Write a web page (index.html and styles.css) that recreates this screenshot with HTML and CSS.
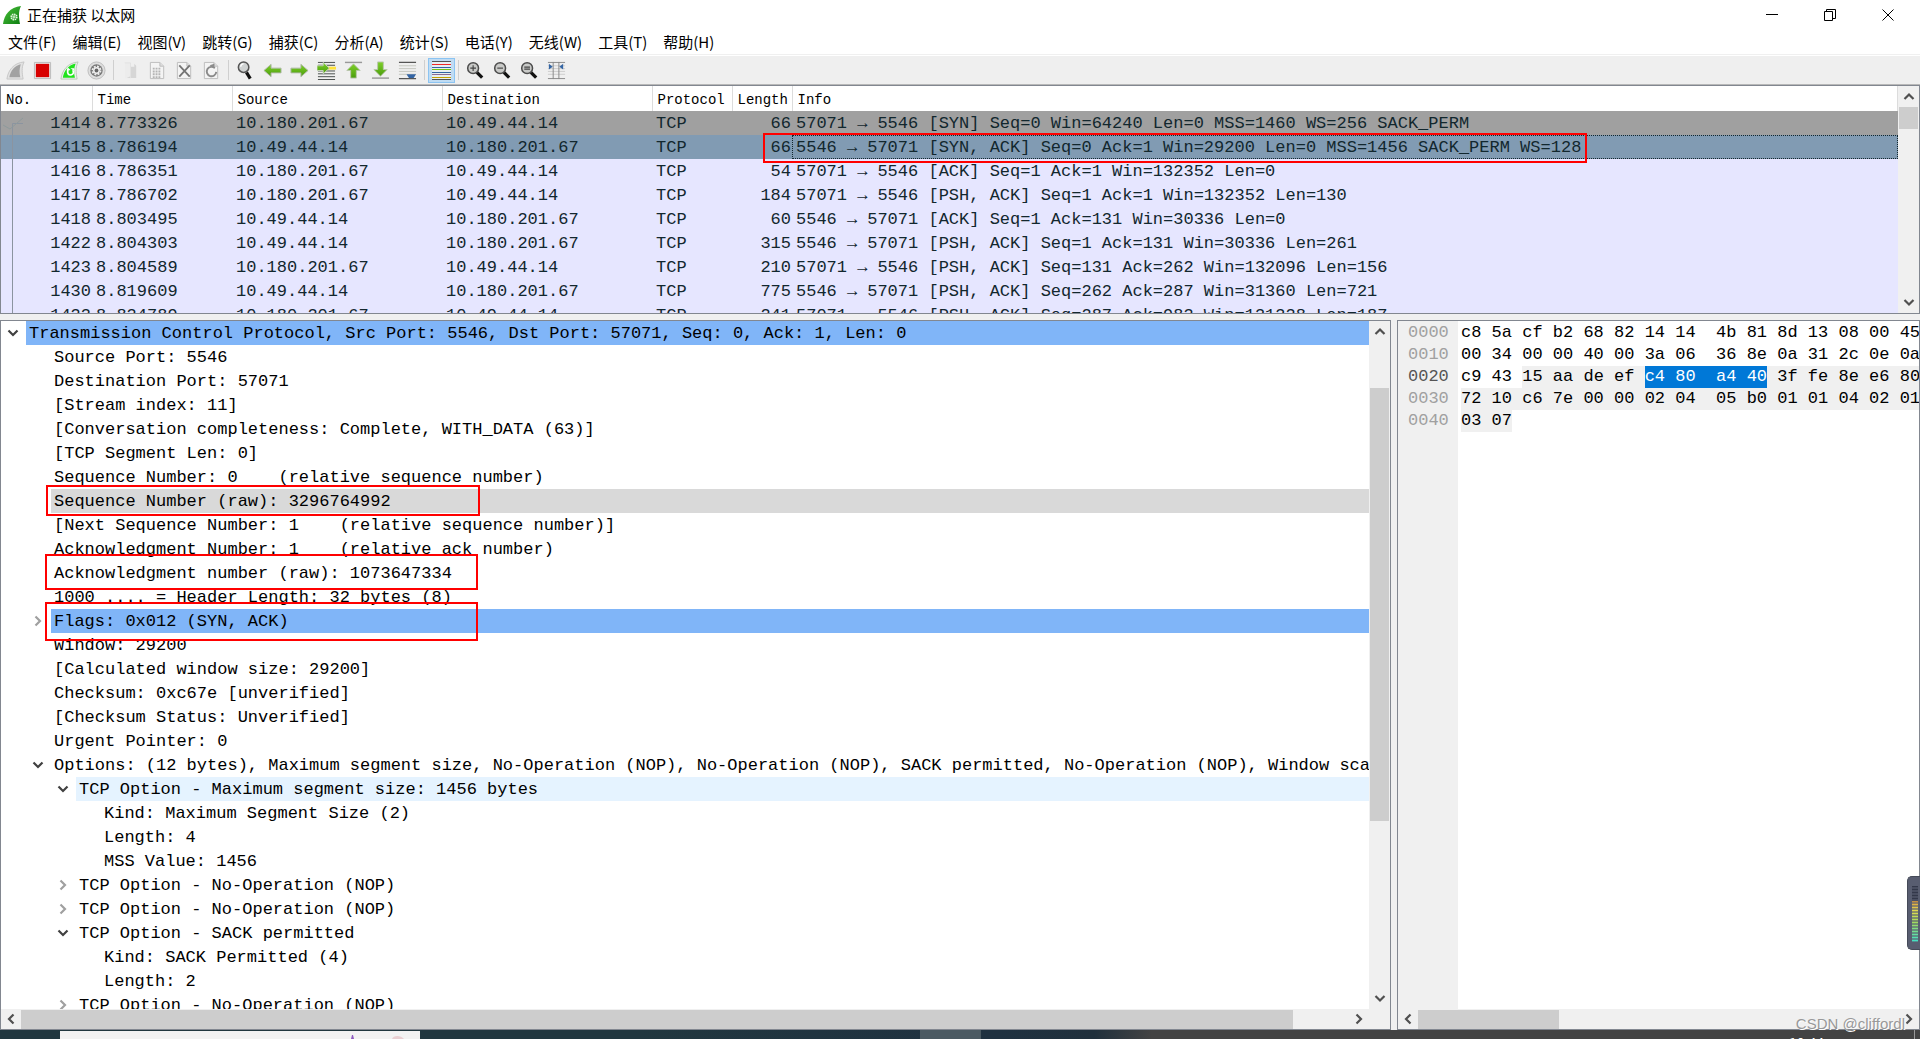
FILE: index.html
```html
<!DOCTYPE html>
<html lang="zh-CN">
<head>
<meta charset="utf-8">
<title>正在捕获 以太网</title>
<link rel="stylesheet" href="styles.css">
</head>
<body>
<svg class="defs" aria-hidden="true">
  <defs>
    <linearGradient id="fin" x1="0" y1="0" x2="1" y2="1"><stop offset="0" stop-color="#4cc23a"/><stop offset="1" stop-color="#0d7d12"/></linearGradient>
    <linearGradient id="green" x1="0" y1="0" x2="0" y2="1"><stop offset="0" stop-color="#7fd02a"/><stop offset="1" stop-color="#4a9c0c"/></linearGradient>
    <symbol id="down" viewBox="0 0 12 12"><path d="M1.5 3.5 6 8l4.500-4.500" fill="none" stroke="currentColor" stroke-width="2.200"/></symbol>
    <symbol id="up" viewBox="0 0 12 12"><path d="M1.500 8.500 6 4l4.500 4.500" fill="none" stroke="currentColor" stroke-width="2.200"/></symbol>
    <symbol id="right" viewBox="0 0 12 12"><path d="M3.500 1.500 8 6l-4.500 4.500" fill="none" stroke="currentColor" stroke-width="2.200"/></symbol>
    <symbol id="left" viewBox="0 0 12 12"><path d="M8.500 1.500 4 6l4.500 4.500" fill="none" stroke="currentColor" stroke-width="2.200"/></symbol>
    <symbol id="page" viewBox="0 0 20 20"><path d="M2.500 1.500h10l4 4v13h-14z" fill="#f4f4f4" stroke="#bdbdbd"/><path d="M12.500 1.500v4h4" fill="#ddd" stroke="#bdbdbd"/></symbol>
    <symbol id="lens" viewBox="0 0 20 20"><path d="m11.500 12 5.500 5.500" stroke="#111" stroke-width="3.400"/><circle cx="7.500" cy="7.500" r="5.700" fill="#c9cac8" stroke="#4c4c4c" stroke-width="1.600"/></symbol>
  </defs>
</svg>

<header class="titlebar">
  <svg class="app-icon" viewBox="0 0 20 20"><path d="M1 19C2 10 8 2 19 1c-3 6-2 12-1 18z" fill="url(#fin)"/><circle cx="12" cy="12" r="2.600" fill="none" stroke="#e4f6e0" stroke-width="2" stroke-dasharray="1.400 .6"/><circle cx="12" cy="12" r="1" fill="#e4f6e0"/></svg>
  <h1>正在捕获 以太网</h1>
  <div class="window-controls">
    <button aria-label="最小化"><svg viewBox="0 0 12 12"><path d="M0 5.500h12" stroke="#000"/></svg></button>
    <button aria-label="还原"><svg viewBox="0 0 12 12"><path d="M.5 2.500h8v9h-8zM2.500 2.500v-2h9v9h-3" fill="none" stroke="#000"/></svg></button>
    <button aria-label="关闭"><svg viewBox="0 0 12 12"><path d="m.5.5 11 11m0-11-11 11" stroke="#000"/></svg></button>
  </div>
</header>

<nav class="menubar">
  <button>文件(F)</button><button>编辑(E)</button><button>视图(V)</button><button>跳转(G)</button><button>捕获(C)</button><button>分析(A)</button><button>统计(S)</button><button>电话(Y)</button><button>无线(W)</button><button>工具(T)</button><button>帮助(H)</button>
</nav>

<div class="toolbar">
  <button aria-label="开始捕获"><svg viewBox="0 0 20 20"><path d="M1 19C2 10 8 2 19 1c-3 6-2 12-1 18z" fill="#e2e2e2" stroke="#c6c6c6"/><path d="M3.500 17C5 10 9 5 15.500 3.500c-1.500 5-1.500 9-.5 13.500z" fill="#a2a2a2"/></svg></button>
  <button aria-label="停止捕获"><svg viewBox="0 0 20 20"><path d="M1.500 1.500h17v17h-17z" fill="#e8e8e8" stroke="#bbb"/><path d="M3 3h14v14H3z" fill="#d80000"/></svg></button>
  <button aria-label="重新开始"><svg viewBox="0 0 20 20"><path d="M1 19C2 10 8 2 19 1c-3 6-2 12-1 18z" fill="#eee" stroke="#b7c9b4"/><path d="M3 17.500C4 10 9 4 16.500 2.500c-2 5-2 10-.8 15z" fill="#20e31c"/><path d="M8.500 9.500c-1.500 3 .5 5.500 3 5.200 2.500-.3 3.500-3 1.800-5" fill="none" stroke="#fff" stroke-width="1.800"/><path d="m7 10.500 1-4 3 3zM11 7.500h4v3z" fill="#fff"/></svg></button>
  <button aria-label="捕获选项"><svg viewBox="0 0 20 20"><circle cx="10" cy="10" r="9" fill="#dedede" stroke="#bdbdbd"/><circle cx="10" cy="10" r="6.500" fill="#777"/><circle cx="10" cy="10" r="4.300" fill="none" stroke="#eee" stroke-width="1.800" stroke-dasharray="2 1.380"/><circle cx="10" cy="10" r="3.600" fill="#eee"/><circle cx="10" cy="10" r="2" fill="#666"/></svg></button>
  <i></i>
  <button aria-label="打开"><svg viewBox="0 0 20 20"><path d="M4 2h6v16H4z" fill="#ececec"/><path d="M10 6h4V3l2 2v13H6l4-2z" fill="#d6d6d6"/><path d="M4 2h6v16" fill="none" stroke="#e2e2e2"/></svg></button>
  <button aria-label="保存"><svg viewBox="0 0 20 20"><use href="#page"/><path d="M5 8h9M5 11h9M5 14h9M5 17h9" stroke="#b4b4b4" stroke-width="2" stroke-dasharray="2 1"/></svg></button>
  <button aria-label="关闭文件"><svg viewBox="0 0 20 20"><use href="#page"/><path d="m4.500 4.500 11 12m0-12-11 12" stroke="#747474" stroke-width="1.900"/></svg></button>
  <button aria-label="重新加载"><svg viewBox="0 0 20 20"><use href="#page"/><path d="M13.500 7.500a5 5 0 1 0 1.500 4" fill="none" stroke="#8b8b8b" stroke-width="2"/><path d="M8 4.500 13 3v5z" fill="#8b8b8b"/></svg></button>
  <i></i>
  <button aria-label="查找"><svg viewBox="0 0 20 20"><path d="m11 12 4 6.500" stroke="#111" stroke-width="3.400"/><circle cx="8" cy="6.500" r="5.500" fill="#cfd2d2" stroke="#555" stroke-width="1.600"/><path d="M5 6a3 3 0 0 1 3-3" stroke="#fff" fill="none" stroke-width="1.500"/></svg></button>
  <button aria-label="后退"><svg viewBox="0 0 20 20"><path d="m1 10 7.500-6.500V7.500H19v5H8.500v4z" fill="url(#green)" stroke="#aeb8a6"/></svg></button>
  <button aria-label="前进"><svg viewBox="0 0 20 20"><path d="M19 10 11.500 3.500V7.500H1v5h10.500v4z" fill="url(#green)" stroke="#aeb8a6"/></svg></button>
  <button aria-label="转到分组"><svg viewBox="0 0 20 20"><path d="M1 1.500h18M1 4.500h18M1 10.500h18M1 13.500h18M1 16.500h18M1 19.500h18" stroke="#454a48"/><path d="M11 6h9v3h-9z" fill="#ffe23a"/><path d="M13 7.500 6.500 1.500V5H0v5h6.500v3.500z" fill="url(#green)" stroke="#c6d6b8"/></svg></button>
  <button aria-label="首个分组"><svg viewBox="0 0 20 20"><path d="M1 1.500h18" stroke="#999" stroke-width="1.500"/><path d="m10 3 7 7h-4v8H7v-8H3z" fill="url(#green)" stroke="#b9c6ae"/></svg></button>
  <button aria-label="最后分组"><svg viewBox="0 0 20 20"><path d="M1 18h18" stroke="#999" stroke-width="1.500"/><path d="m10 16 7-7h-4V1H7v8H3z" fill="url(#green)" stroke="#b9c6ae"/></svg></button>
  <button aria-label="自动滚动"><svg viewBox="0 0 20 20"><path d="M1 1.500h18M1 18.500h18" stroke="#555" stroke-width="1.300"/><path d="M1 5h18M1 8h18M1 11h18M1 14h18" stroke="#c4c6bf"/><path d="M9 14h10l-2.500 4h-5z" fill="#3465a4"/></svg></button>
  <i></i>
  <button class="on" aria-label="着色"><svg viewBox="0 0 19 19"><path d="M0 0h19v19H0z" fill="#e8eef2"/><path d="M0 .5h19" stroke="#555"/><path d="M0 3.500h19" stroke="#ef2929"/><path d="M0 6.500h19" stroke="#3465a4"/><path d="M0 8.500h19" stroke="#73c216"/><path d="M0 11.500h19" stroke="#3465a4"/><path d="M0 13.500h19" stroke="#8a6b95"/><path d="M0 16.500h19" stroke="#c4a000"/><path d="M0 18.500h19" stroke="#555"/></svg></button>
  <i></i>
  <button aria-label="放大"><svg viewBox="0 0 20 20"><use href="#lens"/><path d="M4.500 7.500h6M7.500 4.500v6" stroke="#444" stroke-width="1.200"/></svg></button>
  <button aria-label="缩小"><svg viewBox="0 0 20 20"><use href="#lens"/><path d="M4.500 7.500h6" stroke="#444" stroke-width="1.200"/></svg></button>
  <button aria-label="正常大小"><svg viewBox="0 0 20 20"><use href="#lens"/><path d="M4.500 6.500h6M4.500 8.500h6" stroke="#444" stroke-width="1.200"/></svg></button>
  <button aria-label="调整列宽"><svg viewBox="0 0 20 20"><path d="M1 1.500h18M1 18.500h18" stroke="#888"/><path d="M1 5h18M1 8h18M1 11h18M1 14h18" stroke="#ccc"/><path d="M6.500 1v18M12.500 1v18" stroke="#888"/><path d="m2 3 4 3-4 3zM17 3l-4 3 4 3z" fill="#3465a4"/></svg></button>
</div>

<main class="panes">
  <section class="pane packets">
    <div class="packet-view">
      <table>
        <colgroup><col class="c-no"><col class="c-time"><col class="c-addr"><col class="c-addr"><col class="c-proto"><col class="c-len"><col></colgroup>
        <thead><tr><th>No.</th><th>Time</th><th>Source</th><th>Destination</th><th>Protocol</th><th>Length</th><th>Info</th></tr></thead>
        <tbody>
          <tr class="syn"><td>1414</td><td>8.773326</td><td>10.180.201.67</td><td>10.49.44.14</td><td>TCP</td><td>66</td><td>57071 <b>→</b> 5546 [SYN] Seq=0 Win=64240 Len=0 MSS=1460 WS=256 SACK_PERM</td></tr>
          <tr class="current"><td>1415</td><td>8.786194</td><td>10.49.44.14</td><td>10.180.201.67</td><td>TCP</td><td>66</td><td>5546 <b>→</b> 57071 [SYN, ACK] Seq=0 Ack=1 Win=29200 Len=0 MSS=1456 SACK_PERM WS=128</td></tr>
          <tr><td>1416</td><td>8.786351</td><td>10.180.201.67</td><td>10.49.44.14</td><td>TCP</td><td>54</td><td>57071 <b>→</b> 5546 [ACK] Seq=1 Ack=1 Win=132352 Len=0</td></tr>
          <tr><td>1417</td><td>8.786702</td><td>10.180.201.67</td><td>10.49.44.14</td><td>TCP</td><td>184</td><td>57071 <b>→</b> 5546 [PSH, ACK] Seq=1 Ack=1 Win=132352 Len=130</td></tr>
          <tr><td>1418</td><td>8.803495</td><td>10.49.44.14</td><td>10.180.201.67</td><td>TCP</td><td>60</td><td>5546 <b>→</b> 57071 [ACK] Seq=1 Ack=131 Win=30336 Len=0</td></tr>
          <tr><td>1422</td><td>8.804303</td><td>10.49.44.14</td><td>10.180.201.67</td><td>TCP</td><td>315</td><td>5546 <b>→</b> 57071 [PSH, ACK] Seq=1 Ack=131 Win=30336 Len=261</td></tr>
          <tr><td>1423</td><td>8.804589</td><td>10.180.201.67</td><td>10.49.44.14</td><td>TCP</td><td>210</td><td>57071 <b>→</b> 5546 [PSH, ACK] Seq=131 Ack=262 Win=132096 Len=156</td></tr>
          <tr><td>1430</td><td>8.819609</td><td>10.49.44.14</td><td>10.180.201.67</td><td>TCP</td><td>775</td><td>5546 <b>→</b> 57071 [PSH, ACK] Seq=262 Ack=287 Win=31360 Len=721</td></tr>
          <tr><td>1433</td><td>8.834789</td><td>10.180.201.67</td><td>10.49.44.14</td><td>TCP</td><td>241</td><td>57071 <b>→</b> 5546 [PSH, ACK] Seq=287 Ack=983 Win=131328 Len=187</td></tr>
        </tbody>
      </table>
      <svg class="stream-line" viewBox="0 0 24 192"><path d="M22 2.500H11.500V192" fill="none" stroke="#8b94a0"/><path d="m2 4 7 4L22-3" fill="none" stroke="#8d9a9c"/></svg>
      <div class="mark mark-packet"></div>
    </div>
    <div class="vbar"><svg><use href="#up"/></svg><span class="thumb thumb-packets"></span><svg class="end"><use href="#down"/></svg></div>
  </section>

  <div class="lower">
    <section class="pane details">
      <div class="tree-area">
        <ul class="tree">
          <li class="l0"><svg><use href="#down"/></svg><span class="blue">Transmission Control Protocol, Src Port: 5546, Dst Port: 57071, Seq: 0, Ack: 1, Len: 0</span></li>
          <li class="l1"><span>Source Port: 5546</span></li>
          <li class="l1"><span>Destination Port: 57071</span></li>
          <li class="l1"><span>[Stream index: 11]</span></li>
          <li class="l1"><span>[Conversation completeness: Complete, WITH_DATA (63)]</span></li>
          <li class="l1"><span>[TCP Segment Len: 0]</span></li>
          <li class="l1"><span>Sequence Number: 0    (relative sequence number)</span></li>
          <li class="l1"><span class="grey">Sequence Number (raw): 3296764992</span></li>
          <li class="l1"><span>[Next Sequence Number: 1    (relative sequence number)]</span></li>
          <li class="l1"><span>Acknowledgment Number: 1    (relative ack number)</span></li>
          <li class="l1"><span>Acknowledgment number (raw): 1073647334</span></li>
          <li class="l1"><span>1000 .... = Header Length: 32 bytes (8)</span></li>
          <li class="l1"><svg class="closed"><use href="#right"/></svg><span class="blue">Flags: 0x012 (SYN, ACK)</span></li>
          <li class="l1"><span>Window: 29200</span></li>
          <li class="l1"><span>[Calculated window size: 29200]</span></li>
          <li class="l1"><span>Checksum: 0xc67e [unverified]</span></li>
          <li class="l1"><span>[Checksum Status: Unverified]</span></li>
          <li class="l1"><span>Urgent Pointer: 0</span></li>
          <li class="l1"><svg><use href="#down"/></svg><span>Options: (12 bytes), Maximum segment size, No-Operation (NOP), No-Operation (NOP), SACK permitted, No-Operation (NOP), Window scale</span></li>
          <li class="l2"><svg><use href="#down"/></svg><span class="hover">TCP Option - Maximum segment size: 1456 bytes</span></li>
          <li class="l3"><span>Kind: Maximum Segment Size (2)</span></li>
          <li class="l3"><span>Length: 4</span></li>
          <li class="l3"><span>MSS Value: 1456</span></li>
          <li class="l2"><svg class="closed"><use href="#right"/></svg><span>TCP Option - No-Operation (NOP)</span></li>
          <li class="l2"><svg class="closed"><use href="#right"/></svg><span>TCP Option - No-Operation (NOP)</span></li>
          <li class="l2"><svg><use href="#down"/></svg><span>TCP Option - SACK permitted</span></li>
          <li class="l3"><span>Kind: SACK Permitted (4)</span></li>
          <li class="l3"><span>Length: 2</span></li>
          <li class="l2"><svg class="closed"><use href="#right"/></svg><span>TCP Option - No-Operation (NOP)</span></li>
        </ul>
        <div class="mark mark-seq"></div>
        <div class="mark mark-ack"></div>
        <div class="mark mark-flags"></div>
      </div>
      <div class="vbar"><svg><use href="#up"/></svg><span class="thumb thumb-details"></span><svg class="end"><use href="#down"/></svg></div>
      <div class="hbar"><svg><use href="#left"/></svg><span class="thumb thumb-tree"></span><svg class="end"><use href="#right"/></svg></div>
    </section>

    <section class="pane bytes">
      <div class="hex-area">
        <pre class="offsets">0000
0010
<em>0020</em>
0030
0040</pre>
        <pre class="hex">c8 5a cf b2 68 82 14 14  4b 81 8d 13 08 00 45
00 34 00 00 40 00 3a 06  36 8e 0a 31 2c 0e 0a
c9 43 <span>15 aa de ef </span><mark>c4 80  a4 40</mark><span> 3f fe 8e e6 80</span>
<span>72 10 c6 7e 00 00 02 04  05 b0 01 01 04 02 01</span>
<span>03 07</span></pre>
      </div>
      <div class="hbar"><svg><use href="#left"/></svg><span class="thumb thumb-hex"></span><svg class="end"><use href="#right"/></svg></div>
    </section>
  </div>
</main>

<footer class="taskbar">
  <div class="search"><svg viewBox="0 0 80 8"><path d="m11 8 1-4h1l1 4z" fill="#8f5bc0"/><path d="M52 8c1-4 9-4 12 0z" fill="#e9cfd2"/></svg></div>
  <div class="task"></div>
  <div class="tray"><time>10:44</time></div>
</footer>

<div class="meter"><span></span></div>
<div class="watermark">CSDN @cliffordl</div>
</body>
</html>
```
FILE: styles.css
```css
* { box-sizing: border-box; }
body {
  margin: 0;
  height: 100vh;
  display: flex;
  flex-direction: column;
  position: relative;
  overflow: hidden;
  background: #fff;
  color: #000;
  font: 15px/24px "Noto Sans CJK SC", sans-serif;
}
button { border: 0; padding: 0; background: none; font: inherit; color: inherit; }
svg { display: block; flex: none; }
.defs { position: absolute; width: 0; height: 0; }

.titlebar { flex: none; display: flex; align-items: center; height: 29px; padding: 0 3px 0 2px; }
.app-icon { width: 20px; height: 20px; }
h1 { margin: 0 0 0 5px; font-size: 15px; font-weight: 400; }
.window-controls { display: flex; margin-left: auto; }
.window-controls button { width: 58px; height: 28px; display: grid; place-items: center; }
.window-controls svg { width: 12px; height: 12px; }

.menubar { flex: none; display: flex; height: 26px; padding: 0; border-bottom: 1px solid #f0f0f0; }
.menubar button { padding: 0 8px; line-height: 26px; }

.toolbar { flex: none; display: flex; align-items: center; height: 29px; margin-top: 1px; padding-left: 2px; background: #efefef; border-bottom: 1px solid #b8b8b8; }
.toolbar button { width: 27px; height: 25px; display: grid; place-items: center; }
.toolbar svg { width: 19px; height: 19px; }
.toolbar i { width: 1px; height: 20px; margin: 0 3px; background: #cfcfcf; }
.toolbar .on { background: #c0dcf3; box-shadow: inset 0 0 0 1px #8cc4f2; }

.panes { flex: 1; min-height: 0; display: flex; flex-direction: column; gap: 6px; background: #f0f0f0; }
.pane { border: 1px solid #828790; background: #fff; overflow: hidden; }

.packets { flex: none; height: 229px; display: flex; }
.packet-view { flex: 1; min-width: 0; position: relative; overflow: hidden; }
table { width: 100%; border-collapse: collapse; table-layout: fixed; }
th { height: 25px; padding: 3px 5px 0; border-right: 1px solid #dcdcdc; text-align: left; font: 14px/22px "Liberation Mono", monospace; }
td, .tree, pre { font: 17px/24px "Liberation Mono", monospace; }
td, .tree span { white-space: pre; }
td { height: 24px; padding: 2px 0 0 4px; line-height: 22px; background: #e6e6ff; color: #12272e; overflow: hidden; }
td:first-child, td:nth-child(6) { text-align: right; padding-right: 1px; }
td b { display: inline-block; width: 10px; font-weight: 400; }
.syn td { background: #a0a0a0; }
.current td { background: #819bb3; }
.current td:last-child { outline: 1px dotted #12272e; outline-offset: -1px; }
.c-no { width: 91px; }
.c-time { width: 140px; }
.c-addr { width: 210px; }
.c-proto { width: 80px; }
.c-len { width: 60px; }
.stream-line { position: absolute; left: 0; top: 35px; width: 24px; height: 192px; overflow: visible; }

.vbar { width: 21px; flex: none; display: flex; flex-direction: column; align-items: center; background: #f0f0f0; }
.vbar svg { width: 12px; height: 21px; color: #505050; }
.hbar { display: flex; align-items: center; height: 20px; background: #f0f0f0; }
.hbar svg { width: 20px; height: 12px; color: #505050; }
.end { margin-top: auto; }
.hbar .end { margin: 0 0 0 auto; }
.thumb { background: #cdcdcd; }
.vbar .thumb { width: 19px; }
.hbar .thumb { height: 19px; }
.thumb-packets { height: 22px; }
.thumb-details { height: 63%; margin-top: 46px; }
.thumb-tree { width: 93%; }
.thumb-hex { width: 27%; }

.lower { flex: 1; min-height: 0; display: grid; grid-template-columns: 1391fr 523fr; gap: 6px; }
.details { display: grid; grid-template: minmax(0, 1fr) 20px / minmax(0, 1fr) 21px; }
.details .hbar { grid-column: 1 / -1; padding-right: 21px; }
.tree-area { position: relative; overflow: hidden; }
.tree { margin: 0; padding: 0; list-style: none; }
.tree li { display: flex; align-items: center; height: 24px; }
.tree span { flex: 1; height: 24px; padding-left: 3px; line-height: 26px; }
.tree svg { width: 12px; height: 12px; margin: 0 7px 0 -19px; color: #404040; }
.tree .closed { color: #a0a0a0; }
.l0 { padding-left: 25px; }
.l1 { padding-left: 50px; }
.l2 { padding-left: 75px; }
.l3 { padding-left: 100px; }
.blue { background: #80b5f8; }
.grey { background: #d9d9d9; }
.hover { background: #e5f3ff; }

.bytes { display: flex; flex-direction: column; }
.hex-area { flex: 1; display: flex; min-width: 0; }
pre { margin: 0; padding-top: 1px; line-height: 22px; }
.offsets { width: 60px; flex: none; padding-left: 10px; background: #f0f0f0; color: #a0a0a0; }
.offsets em { font-style: normal; color: #555; }
.hex { padding-left: 3px; }
.hex span, .hex mark { display: inline-block; height: 22px; vertical-align: top; background: #f0f0f0; }
.hex mark { background: #0078d7; color: #fff; }

.mark { position: absolute; border: 2px solid #f00; }
.mark-packet { left: 762px; top: 47px; width: 824px; height: 30px; }
.mark-seq { left: 45px; top: 164px; width: 434px; height: 31px; }
.mark-ack { left: 44px; top: 233px; width: 433px; height: 36px; }
.mark-flags { left: 44px; top: 281px; width: 433px; height: 39px; }

.taskbar { flex: none; display: flex; height: 9px; overflow: hidden; background: linear-gradient(90deg, #21373f 0 33%, #1f3140 52%, #20303c 57%, #434343 60%); }
.search { width: 360px; margin: 1px 0 0 60px; background: #f2f2f2; }
.search svg { width: 80px; height: 8px; margin-left: 280px; }
.task { width: 61px; margin-left: 500px; background: #4b5a62; }
.tray { margin-left: auto; width: 130px; margin-right: 5px; border-right: 1px solid #999; color: #fff; }
time { display: block; margin: 3px 0 0 4px; font-size: 14px; line-height: 20px; }

.meter { position: absolute; right: 0; top: 876px; width: 13px; height: 74px; padding: 9px 2px 8px 4px; border: 1px solid #454a58; border-right: 0; border-radius: 5px 0 0 5px; background: #585d70; }
.meter span { display: block; height: 56px; background: repeating-linear-gradient(#585d7000 0 1px, #585d7099 1px 3px), linear-gradient(#33384a 0 26%, #e0a040 28%, #e0dc50 45%, #a0dc60 65%, #40e0c8); }
.watermark { position: absolute; right: 15px; bottom: 6px; font: 15px/18px "Liberation Sans", sans-serif; color: #999; text-shadow: 1px 1px 0 #fff; }
```
